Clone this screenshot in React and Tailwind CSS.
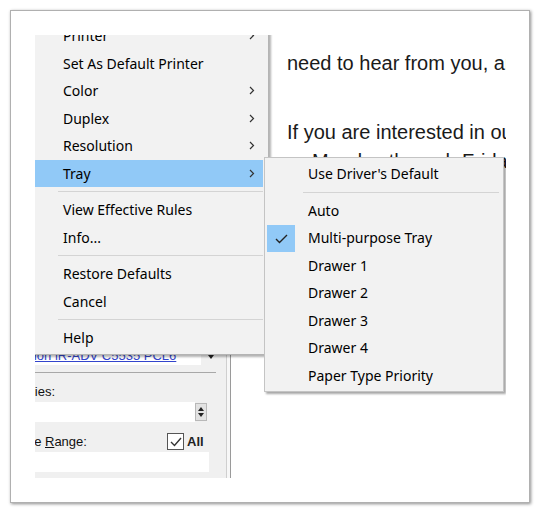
import React from "react";

const Chevron = () => (
  <svg width="6" height="9" viewBox="0 0 6 9" className="shrink-0">
    <path d="M1 1 L4.5 4.5 L1 8" fill="none" stroke="#333" strokeWidth="1.2" />
  </svg>
);

const Check = () => (
  <svg width="13" height="10" viewBox="0 0 13 10">
    <path d="M1 5 L4.5 8.5 L12 1" fill="none" stroke="#222" strokeWidth="1.4" />
  </svg>
);

function Item({ label, arrow, active }) {
  return (
    <div
      className={
        "flex h-[27.5px] items-center pl-[35px] pr-[8px] " +
        (active ? "bg-[#91c9f7]" : "")
      }
    >
      <span className="flex-1 whitespace-nowrap">{label}</span>
      {arrow && <Chevron />}
    </div>
  );
}

function Sep({ ml }) {
  return (
    <div className="flex h-[9px] items-center">
      <div className={"h-px flex-1 bg-[#d4d4d4] " + ml} />
    </div>
  );
}

function SubItem({ label, checked }) {
  return (
    <div className="relative flex h-[27.5px] items-center pl-[43px]">
      {checked && (
        <div className="absolute left-[2px] top-[1px] flex h-[27px] w-[28px] items-center justify-center bg-[#91c9f7]">
          <Check />
        </div>
      )}
      <span className="whitespace-nowrap">{label}</span>
    </div>
  );
}

export default function App() {
  const menuFont = { fontFamily: '"Noto Sans", "Open Sans", sans-serif' };
  return (
    <div className="h-[515px] w-[540px] bg-white pl-[10px] pt-[10px]">
      <div className="h-[493px] w-[520px] border border-[#b0b0b0] bg-white p-[24px] shadow-[1px_1px_3px_rgba(0,0,0,0.45)]">
        <div className="relative flex h-[443px] w-[471px] overflow-hidden">
          {/* left settings pane */}
          <div className="flex h-full shrink-0">
            <div
              className="h-full w-[191px] bg-[#f0f0f0] text-[13px] leading-[15px] text-[#111]"
              style={{ fontFamily: '"Liberation Sans", Arial, sans-serif' }}
            >
              <div className="ml-[-24px] flex flex-col">
                <div className="h-[300px]" />
                <div className="flex h-[30px] items-start">
                  <div className="h-[30px] w-[190px] bg-white pl-[2px] pt-[13px] text-[#3344cc] underline">
                    Canon iR-ADV C5535 PCL6
                  </div>
                  <div className="ml-[7px] mt-[20px] h-0 w-0 border-x-[3px] border-t-[4px] border-x-transparent border-t-[#222]" />
                </div>
                <div className="mt-[7px] h-px w-[205px] bg-[#a8a8a8]" />
                <div className="mt-[11px] h-[15px]">Copies:</div>
                <div className="mt-[3px] flex h-[20px] items-center">
                  <div className="h-[20px] w-[184px] bg-white" />
                  <div className="flex h-[18px] w-[12px] flex-col items-center justify-center gap-[2px] border border-[#b8b8b8] bg-[#e2e2e2]">
                    <div className="h-0 w-0 border-x-[3px] border-b-[4px] border-x-transparent border-b-[#222]" />
                    <div className="h-0 w-0 border-x-[3px] border-t-[4px] border-x-transparent border-t-[#222]" />
                  </div>
                </div>
                <div className="mt-[11px] flex h-[17px] items-center">
                  <span className="w-[156px]">
                    Page <span className="underline">R</span>ange:
                  </span>
                  <div className="flex h-[17px] w-[17px] items-center justify-center border border-[#555] bg-white">
                    <svg width="12" height="10" viewBox="0 0 12 10">
                      <path d="M1 5 L4.5 8.5 L11 1" fill="none" stroke="#333" strokeWidth="1.4" />
                    </svg>
                  </div>
                  <span className="ml-[3px] font-bold text-[#222]">All</span>
                </div>
                <div className="mt-[2px] h-[20px] w-[198px] bg-white" />
              </div>
            </div>
            <div className="h-full w-px bg-[#cfcfcf]" />
            <div className="h-full w-[3px] bg-[#f7f7f7]" />
            <div className="h-full w-px bg-[#9a9a9a]" />
          </div>

          {/* document */}
          <div
            className="relative flex-1 overflow-hidden whitespace-nowrap bg-white pl-[56px] pt-[15px] text-[20px] leading-[26px] text-[#1a1a1a]"
            style={{ fontFamily: '"Liberation Sans", Arial, sans-serif' }}
          >
            <div>need to hear from you, and we</div>
            <div className="mt-[43px]">If you are interested in our</div>
            <div className="mt-[3px] flex">
              <span className="w-[40px] pl-[18px]">•</span>
              <span>Monday through Friday</span>
            </div>
          </div>

          {/* main context menu */}
          <div
            className="absolute left-[-10px] top-[-16px] z-10 w-[244px] border border-[#b4b4b4] bg-[#f2f2f2] py-[2px] pl-[2px] pr-[5px] text-[14px] text-black shadow-[2px_2px_2px_rgba(0,0,0,0.3)]"
            style={menuFont}
          >
            <Item label="Printer" arrow />
            <Item label="Set As Default Printer" />
            <Item label="Color" arrow />
            <Item label="Duplex" arrow />
            <Item label="Resolution" arrow />
            <Item label="Tray" arrow active />
            <Sep ml="ml-[30px]" />
            <Item label="View Effective Rules" />
            <Item label="Info..." />
            <Sep ml="ml-[30px]" />
            <Item label="Restore Defaults" />
            <Item label="Cancel" />
            <Sep ml="ml-[30px]" />
            <Item label="Help" />
          </div>

          {/* submenu */}
          <div
            className="absolute left-[229px] top-[122px] z-20 w-[240px] border border-[#c4c4c4] bg-[#f2f2f2] py-[2px] text-[14px] text-black shadow-[2px_2px_2px_rgba(0,0,0,0.35)]"
            style={menuFont}
          >
            <SubItem label="Use Driver's Default" />
            <div className="flex h-[9px] items-center pl-[38px] pr-[4px]">
              <div className="h-px flex-1 bg-[#d4d4d4]" />
            </div>
            <SubItem label="Auto" />
            <SubItem label="Multi-purpose Tray" checked />
            <SubItem label="Drawer 1" />
            <SubItem label="Drawer 2" />
            <SubItem label="Drawer 3" />
            <SubItem label="Drawer 4" />
            <SubItem label="Paper Type Priority" />
          </div>
        </div>
      </div>
    </div>
  );
}
